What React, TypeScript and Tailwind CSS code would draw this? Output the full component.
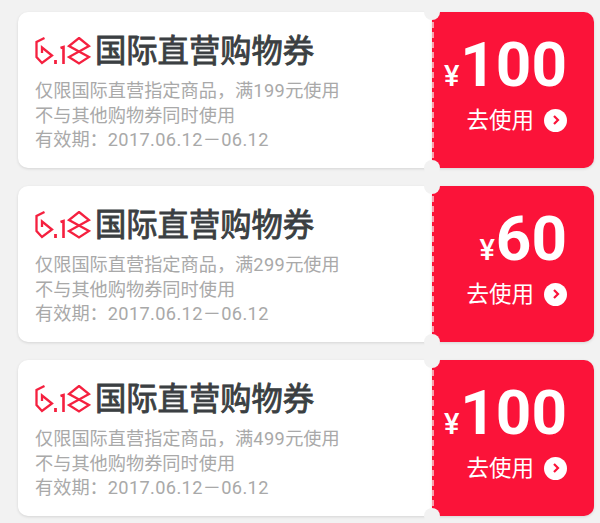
const coupons = [
  { amount: "100", min: "199" },
  { amount: "60", min: "299" },
  { amount: "100", min: "499" },
];

function Logo() {
  return (
    <svg width="56" height="28" viewBox="0 0 56 28" fill="none" stroke="#f5203f" strokeWidth="2.3" className="shrink-0">
      <path d="M9.5 1 L1.5 5 V20 L7 26 L17 18.5 L7 10.5 V16" />
      <path d="M20.5 23 V27" strokeWidth="2.8" />
      <path d="M25.5 11 L28.5 10 V27" strokeWidth="2.6" />
      <path d="M44 1 L54 9 L34 20 L44 26.5 L54 20 L34 9 Z" />
    </svg>
  );
}

function Coupon({ amount, min }: { amount: string; min: string }) {
  return (
    <div className="flex h-[156px] w-full">
      <div className="flex-1 rounded-l-[10px] bg-white pl-[17px] pt-[21px] shadow-[0_1px_3px_rgba(0,0,0,0.12)]">
        <div className="flex h-[36px] items-center gap-[6px]">
          <Logo />
          <span className="ml-[-2px] pt-[1px] text-[31.3px] leading-[36px] text-[#3b3f42] [-webkit-text-stroke:0.9px_#3b3f42]">国际直营购物券</span>
        </div>
        <div className="mt-[10px] text-[18.2px] leading-[24.5px] text-[#a9a9a9]">
          <p>仅限国际直营指定商品，满<span className="tracking-[0.4px]">{min}</span>元使用</p>
          <p>不与其他购物券同时使用</p>
          <p>有效期：<span className="tracking-[0.36px]">2017.06.12－06.12</span></p>
        </div>
      </div>
      <div className="relative w-[162px] shrink-0 rounded-r-[10px] border-l-2 border-dashed border-l-[#f8a0ae] bg-[#fb1339] shadow-[0_1px_3px_rgba(0,0,0,0.12)]">
        <div className="absolute left-[-10px] top-[-8px] h-[16px] w-[16px] rounded-full bg-[#f2f2f2]" />
        <div className="absolute bottom-[-8px] left-[-10px] h-[16px] w-[16px] rounded-full bg-[#f2f2f2]" />
        <div className="flex h-full flex-col items-end pr-[27px] pt-[14px] text-white">
          <div className="flex items-baseline">
            <span className="mr-[1px] text-[29px] font-medium leading-none">¥</span>
            <span className="text-[62px] font-bold leading-[78px]">{amount}</span>
          </div>
          <div className="mt-[1px] flex items-center gap-[10px]">
            <span className="text-[22.5px] leading-[30px]">去使用</span>
            <span className="flex h-[23px] w-[23px] items-center justify-center rounded-full bg-white">
              <svg width="12" height="12" viewBox="0 0 12 12" fill="none" stroke="#fb1339" strokeWidth="2.2">
                <path d="M4 2 L8 6 L4 10" />
              </svg>
            </span>
          </div>
        </div>
      </div>
    </div>
  );
}

export default function App() {
  return (
    <div
      className="flex h-[523px] w-[600px] flex-col gap-[18px] overflow-hidden bg-[#f2f2f2] pl-[18px] pr-[6px] pt-[12px]"
      style={{ fontFamily: '"Roboto", "Noto Sans CJK SC", sans-serif' }}
    >
      {coupons.map((c, i) => (
        <Coupon key={i} amount={c.amount} min={c.min} />
      ))}
    </div>
  );
}
